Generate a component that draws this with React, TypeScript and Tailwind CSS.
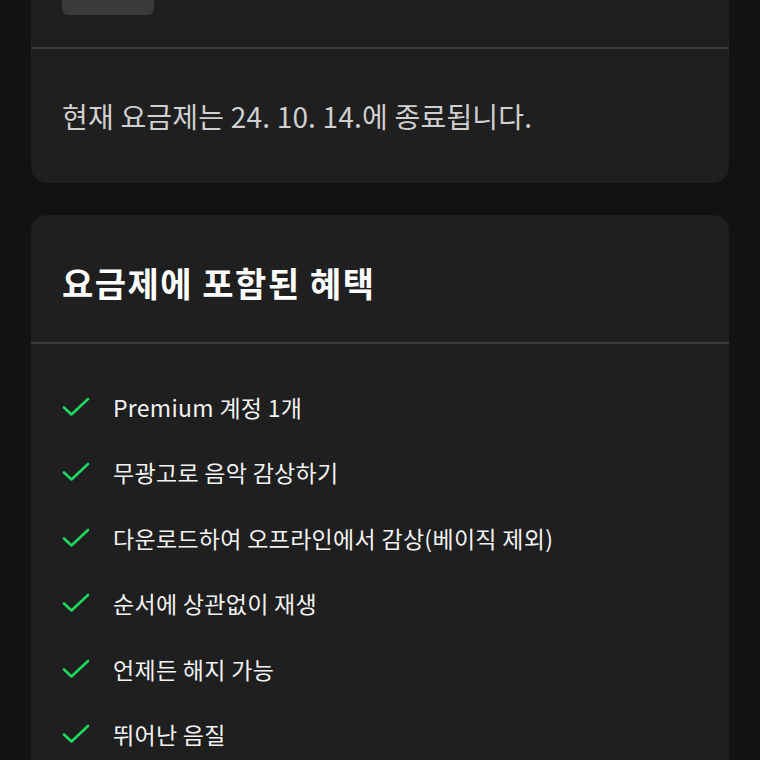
import React from "react";

const benefits = [
    "Premium 계정 1개",
    "무광고로 음악 감상하기",
    "다운로드하여 오프라인에서 감상(베이직 제외)",
    "순서에 상관없이 재생",
    "언제든 해지 가능",
    "뛰어난 음질",
];

const Check: React.FC = () => (
    <svg width="28" height="20" viewBox="0 0 28 20" fill="none" className="shrink-0">
        <path
            d="M2 10.5 L9.5 17.5 L26 2"
            stroke="#1ed760"
            strokeWidth="2.6"
            strokeLinecap="round"
            strokeLinejoin="round"
        />
    </svg>
);

export default function App() {
    return (
        <div
            className="min-h-[760px] h-[760px] overflow-hidden bg-[#121212] px-[31px]"
            style={{ fontFamily: '"Noto Sans CJK KR", "Noto Sans", sans-serif' }}
        >
            <div className="-mt-[40px] flex flex-col gap-8">
                {/* current plan card */}
                <div className="rounded-2xl bg-[#1f1f1f]">
                    <div className="px-[31px] pt-[15px] pb-8">
                        <div className="h-10 w-[92px] rounded-md bg-[#3a3a3a]"></div>
                    </div>
                    <div className="h-[2px] bg-[#3a3a3a]"></div>
                    <p className="px-[31px] py-[49px] text-[28px] leading-[36px] tracking-[0.2px] text-[#cfcfcf]">
                        현재 요금제는 24. 10. 14.에 종료됩니다.
                    </p>
                </div>

                {/* benefits card */}
                <div className="rounded-2xl bg-[#1f1f1f]">
                    <h2 className="px-[31px] pt-[48px] pb-[39px] text-[34px] leading-[40px] tracking-[1.5px] font-bold text-white">
                        요금제에 포함된 혜택
                    </h2>
                    <div className="h-[2px] bg-[#3a3a3a]"></div>
                    <ul className="flex flex-col gap-[33.4px] px-[31px] pt-[47px] pb-10">
                        {benefits.map((b) => (
                            <li key={b} className="flex items-center gap-[23px] h-8">
                                <Check />
                                <span className="text-[23px] leading-8 tracking-[0.3px] text-[#f2f2f2]">{b}</span>
                            </li>
                        ))}
                    </ul>
                </div>
            </div>
        </div>
    );
}
